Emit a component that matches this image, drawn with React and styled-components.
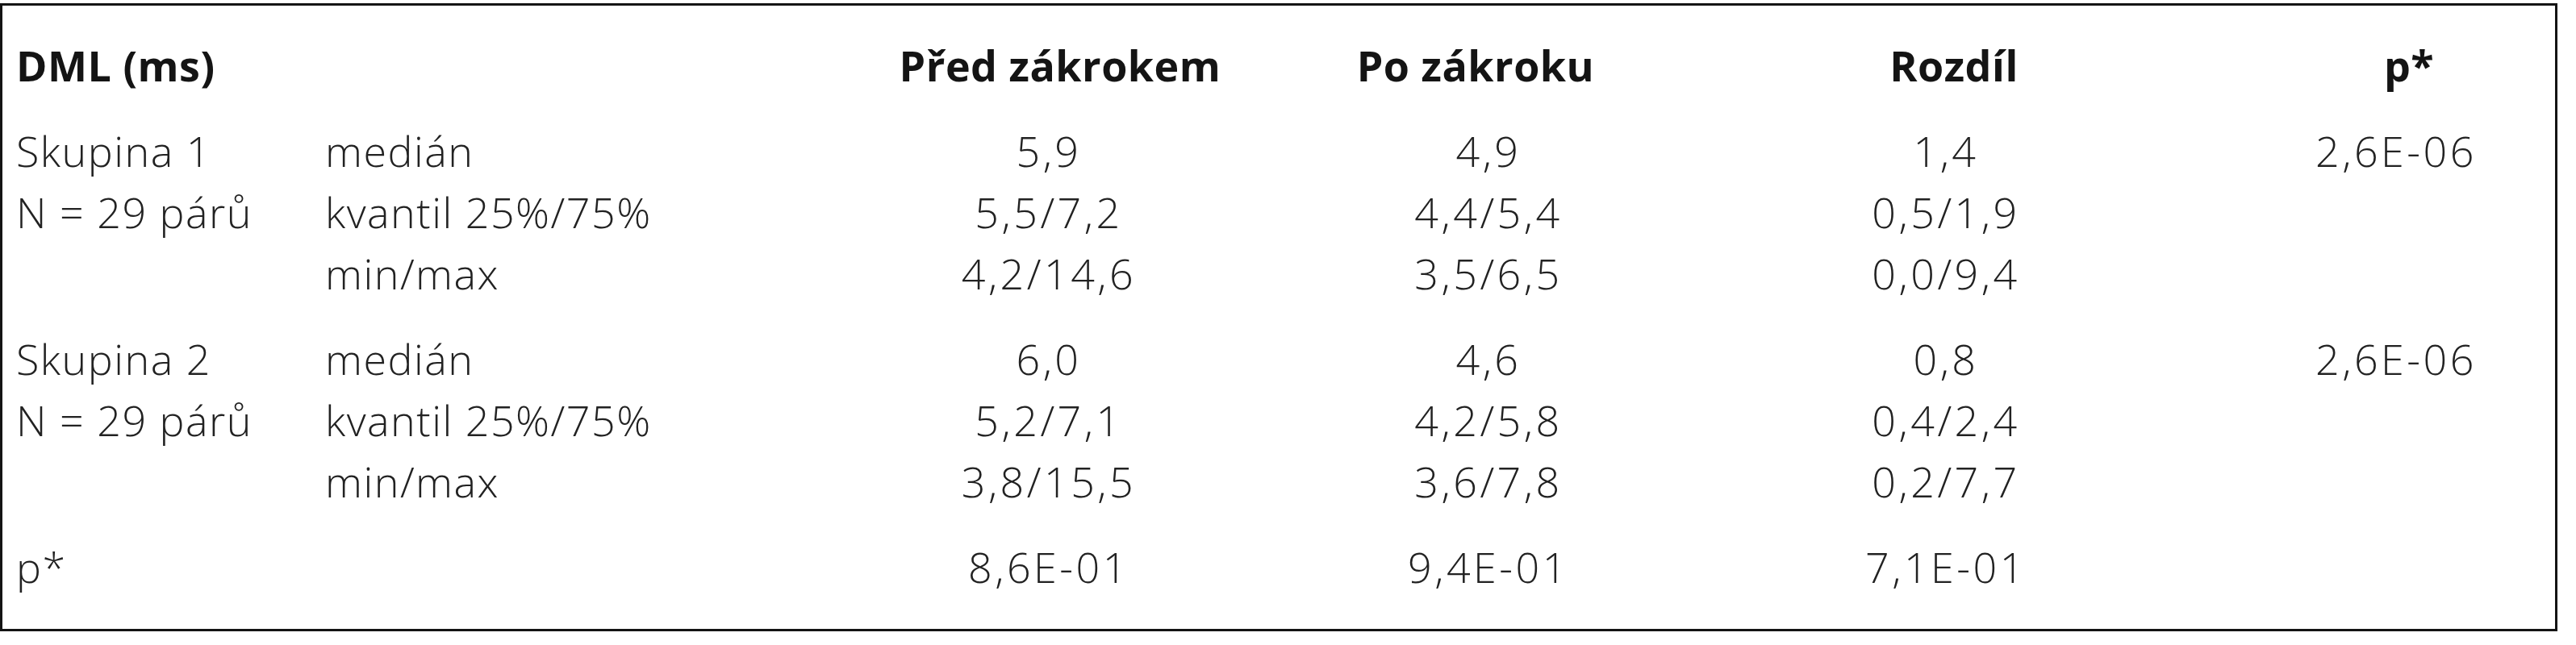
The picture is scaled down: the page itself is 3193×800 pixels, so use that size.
import React from "react";
import styled, { createGlobalStyle } from "styled-components";

const GlobalStyle = createGlobalStyle`
  html, body {
    margin: 0;
    padding: 0;
    background: #ffffff;
  }
  body {
    font-family: "Open Sans", "Noto Sans", "DejaVu Sans", sans-serif;
  }
`;

const Page = styled.div`
  padding-top: 4px;
  background: #ffffff;
`;

const TableBox = styled.div`
  box-sizing: border-box;
  width: 3170px;
  border: 3px solid #141414;
  padding: 36px 3px 39px 17px;
  display: flex;
  flex-direction: column;
  gap: 30px;
`;

const Section = styled.div`
  display: flex;
  flex-direction: column;
`;

const Row = styled.div`
  display: grid;
  grid-template-columns: 383px 555px 684px 406px 728px 388px;
  height: 76px;
  align-items: center;
`;

const Cell = styled.div`
  font-size: 52px;
  line-height: 76px;
  letter-spacing: 1.5px;
  font-weight: 300;
  color: #222222;
  text-align: left;
  white-space: nowrap;
`;

const NumCell = styled(Cell)`
  text-align: center;
  letter-spacing: 3.5px;
`;

const HeadCell = styled(Cell)`
  font-weight: 700;
  letter-spacing: 0.5px;
  color: #141414;
  text-align: ${(p) => (p.$center ? "center" : "left")};
  padding-left: ${(p) => (p.$shift > 0 ? p.$shift * 2 : 0)}px;
  padding-right: ${(p) => (p.$shift < 0 ? -p.$shift * 2 : 0)}px;
`;

const groups = [
  {
    name: ["Skupina 1", "N = 29 párů", ""],
    rows: [
      ["medián", "5,9", "4,9", "1,4", "2,6E-06"],
      ["kvantil 25%/75%", "5,5/7,2", "4,4/5,4", "0,5/1,9", ""],
      ["min/max", "4,2/14,6", "3,5/6,5", "0,0/9,4", ""],
    ],
  },
  {
    name: ["Skupina 2", "N = 29 párů", ""],
    rows: [
      ["medián", "6,0", "4,6", "0,8", "2,6E-06"],
      ["kvantil 25%/75%", "5,2/7,1", "4,2/5,8", "0,4/2,4", ""],
      ["min/max", "3,8/15,5", "3,6/7,8", "0,2/7,7", ""],
    ],
  },
];

export default function App() {
  return (
    <Page>
      <GlobalStyle />
      <TableBox>
        <Row>
          <HeadCell>DML (ms)</HeadCell>
          <HeadCell />
          <HeadCell $center $shift={14}>Před zákrokem</HeadCell>
          <HeadCell $center $shift={-16}>Po zákroku</HeadCell>
          <HeadCell $center $shift={10}>Rozdíl</HeadCell>
          <HeadCell $center $shift={16}>p*</HeadCell>
        </Row>
        {groups.map((g, gi) => (
          <Section key={gi}>
            {g.rows.map((r, ri) => (
              <Row key={ri}>
                <Cell>{g.name[ri]}</Cell>
                <Cell>{r[0]}</Cell>
                <NumCell>{r[1]}</NumCell>
                <NumCell>{r[2]}</NumCell>
                <NumCell>{r[3]}</NumCell>
                <NumCell>{r[4]}</NumCell>
              </Row>
            ))}
          </Section>
        ))}
        <Row>
          <Cell>p*</Cell>
          <Cell />
          <NumCell>8,6E-01</NumCell>
          <NumCell>9,4E-01</NumCell>
          <NumCell>7,1E-01</NumCell>
          <NumCell />
        </Row>
      </TableBox>
    </Page>
  );
}
